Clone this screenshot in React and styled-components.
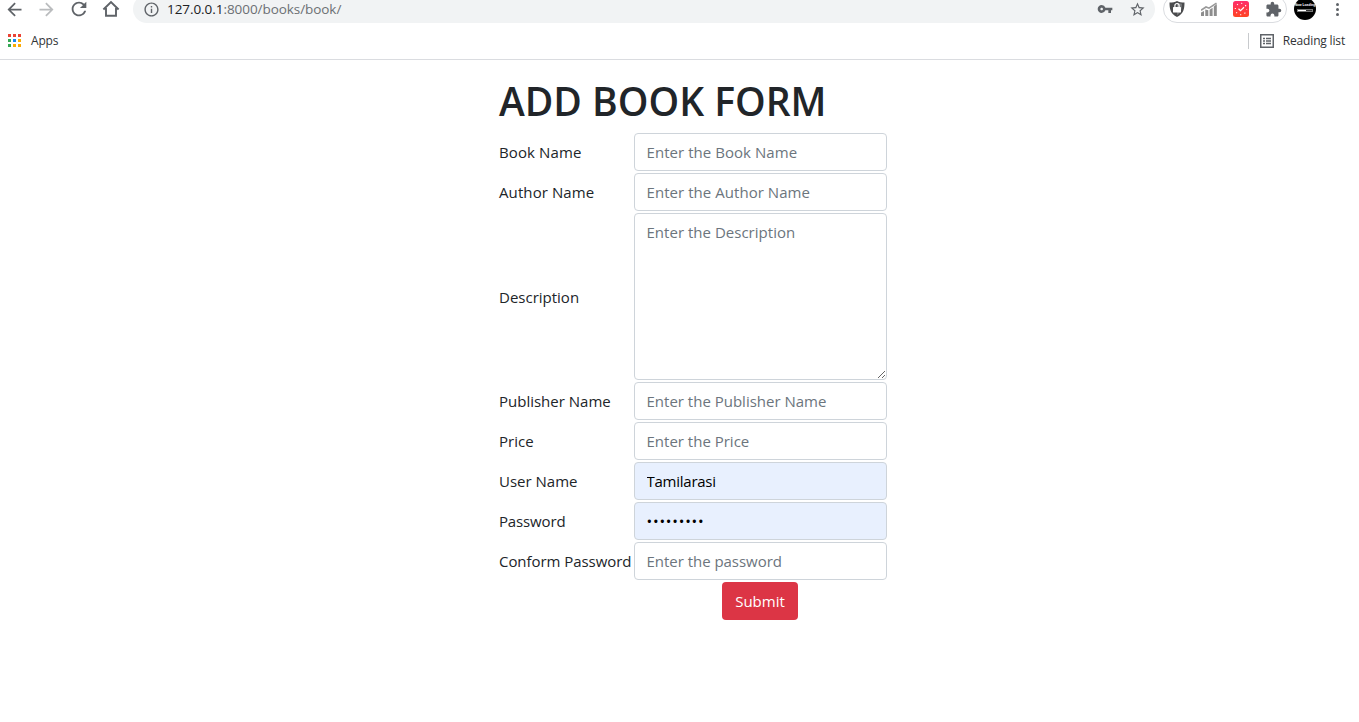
import React from "react";
import styled, { createGlobalStyle } from "styled-components";
import { MdArrowBack, MdArrowForward, MdRefresh, MdInfoOutline, MdVpnKey, MdStarBorder, MdExtension } from "react-icons/md";

const GlobalStyle = createGlobalStyle`
  *, *::before, *::after { box-sizing: border-box; }
  body {
    margin: 0;
    background: #fff;
    color: #212529;
    font-family: "Segoe UI", "Open Sans", "Noto Sans", sans-serif;
    overflow: hidden;
  }
  svg { display: block; flex: none; }
`;

const Chrome = styled.header`
  height: 60px;
  overflow: hidden;
  border-bottom: 1px solid #dadce0;
`;

const Toolbar = styled.div`
  display: flex;
  align-items: center;
  height: 28px;
  margin-top: -5px;
`;

const NavButton = styled.span`
  display: flex;
  justify-content: center;
  width: 32px;
  color: ${(p) => (p.$disabled ? "#babcbe" : "#5f6368")};
`;

const NavGroup = styled.div`
  display: flex;
  align-items: center;
  width: 134px;
  margin-left: -1px;
  svg { margin-left: -1px; }
`;

const AddressBar = styled.div`
  display: flex;
  align-items: center;
  width: 1022px;
  height: 28px;
  padding: 0 9px 0 10px;
  border-radius: 14px;
  background: #f1f3f4;
  color: #5f6368;
`;

const Url = styled.span`
  flex: 1;
  margin-left: 7px;
  font-size: 13.5px;
  line-height: 20px;
  letter-spacing: ${(p) => p.$tracking}px;
  color: #6b6f73;
  b { font-weight: 400; color: #202124; }
`;

const AddressActions = styled.div`
  display: flex;
  align-items: center;
  gap: 16px;
`;

const Extensions = styled.div`
  display: flex;
  align-items: center;
  gap: 16px;
  width: 124px;
  height: 28px;
  margin-left: 8px;
  padding-left: 5px;
  border: 1px solid #dadce0;
  border-radius: 14px;
  color: #5f6368;
`;

const Avatar = styled.div`
  display: flex;
  flex-direction: column;
  align-items: center;
  width: 22px;
  height: 22px;
  margin-left: 7px;
  border-radius: 50%;
  background: #000;
  color: #fff;
`;

const Menu = styled.div`
  display: grid;
  gap: 2px;
  margin-left: 20px;
  i { width: 3px; height: 3px; border-radius: 50%; background: #5f6368; }
`;

const Bookmarks = styled.div`
  display: flex;
  align-items: center;
  justify-content: space-between;
  height: 36px;
  padding: 0 14px 0 8px;
  font-size: 12px;
  line-height: 16px;
  color: #303336;
`;

const BookmarkItem = styled.div`
  display: flex;
  align-items: center;
  gap: ${(p) => p.$gap}px;
  letter-spacing: ${(p) => p.$tracking}px;
`;

const BookmarkText = styled.span`
  margin-top: -1px;
`;

const Divider = styled.span`
  width: 1px;
  height: 16px;
  margin-right: 11px;
  background: #c8cacd;
`;

const AppsGrid = styled.span`
  display: grid;
  grid-template-columns: repeat(3, 3px);
  gap: 2px;
  margin-top: -1px;
`;

const AppsDot = styled.i`
  height: 3px;
  background: ${(p) => p.$color};
`;

const ReadingGroup = styled.div`
  display: flex;
  align-items: center;
`;

const Page = styled.main`
  width: 388px;
  margin: 17px 0 0 499px;
`;

const Title = styled.h1`
  margin: 0 0 8px;
  font-size: 39px;
  line-height: 48px;
  font-weight: 600;
  letter-spacing: ${(p) => p.$tracking}px;
  white-space: nowrap;
`;

const Form = styled.form`
  display: grid;
  gap: 2px;
`;

const Row = styled.div`
  display: grid;
  grid-template-columns: 135px 253px;
  align-items: center;
`;

const Label = styled.label`
  font-size: 15px;
  line-height: 24px;
  letter-spacing: ${(p) => p.$tracking}px;
  white-space: nowrap;
`;

const Field = styled.input`
  display: block;
  width: 100%;
  height: ${(p) => (p.$tall ? 167 : 38)}px;
  margin: 0;
  padding: 6px 11.5px;
  border: 1px solid #ced4da;
  border-radius: 4px;
  outline: 0;
  background: ${(p) => (p.$filled ? "#e8f0fe" : "#fff")};
  color: #000;
  font-family: inherit;
  font-size: 15px;
  line-height: 24px;
  letter-spacing: ${(p) => p.$tracking}px;
  &::placeholder { color: #6c757d; opacity: 1; }
`;

const Submit = styled.button`
  justify-self: start;
  width: 76px;
  height: 38px;
  margin-left: 223px;
  padding: 0;
  border: 0;
  border-radius: 4px;
  background: #dc3545;
  color: #fff;
  font-family: inherit;
  font-size: 15px;
  line-height: 24px;
`;

const fields = [
  { label: "Book Name", placeholder: "Enter the Book Name", lt: 0.12, ft: 0.05 },
  { label: "Author Name", placeholder: "Enter the Author Name", lt: 0.1, ft: 0.05 },
  { label: "Description", placeholder: "Enter the Description", tall: true, lt: 0, ft: 0.02 },
  { label: "Publisher Name", placeholder: "Enter the Publisher Name", lt: 0, ft: 0 },
  { label: "Price", placeholder: "Enter the Price", lt: 0, ft: 0 },
  { label: "User Name", value: "Tamilarasi", lt: 0, ft: -0.25 },
  { label: "Password", value: "123456789", type: "password", lt: -0.15, ft: 0.8 },
  { label: "Conform Password", placeholder: "Enter the password", type: "password", lt: -0.05, ft: -0.03 },
];

const appColors = ["#ea4335", "#ea4335", "#ea4335", "#34a853", "#1a88f0", "#fbab05", "#34a853", "#fbab05", "#fbab05"];

const HomeIcon = () => (
  <svg width="18" height="18" viewBox="0 0 18 18" fill="none" stroke="#5f6368" strokeWidth="1.9">
    <path d="M1.400 9.500 9 2l7.600 7.500M4 8v7.700h10V8" />
  </svg>
);

const ShieldIcon = () => (
  <svg width="16" height="18" viewBox="0 0 16 18">
    <path d="M8 1c2 1 4.500 1.500 7.500 1.600C15.500 9 14.500 14 8 17 1.500 14 .5 9 .5 2.600 3.500 2.500 6 2 8 1Z" fill="#4a4b4d" />
    <path d="M8 2.500c1.500.8 3 1.100 5 1.300-.2 5-1 9-5 11.400Z" fill="#77797b" />
    <rect x="4" y="7" width="8" height="5.500" rx=".6" fill="#fff" />
    <path d="M5.900 7.500V5.600a2.100 2.100 0 0 1 4.200 0v1.900" fill="none" stroke="#fff" strokeWidth="1.200" />
  </svg>
);

const ChartIcon = () => (
  <svg width="16" height="14" viewBox="0 0 16 14" fill="#8d8d8d">
    <path d="M0 10.500 3 9v5H0zM4.300 7.500l3 .8V14h-3zM8.600 7.800l3-2V14h-3zM12.800 4.500 15.800 2v12h-3z" />
    <path d="M0 8.300 5 5l3 1.200 7.500-5" fill="none" stroke="#999" strokeWidth="1.600" />
  </svg>
);

const ClockIcon = () => (
  <svg width="16" height="16" viewBox="0 0 16 16">
    <defs>
      <linearGradient id="clock" x1="0" y1="0" x2="0" y2="1">
        <stop offset="0" stopColor="#ff2d6b" />
        <stop offset="1" stopColor="#ff4422" />
      </linearGradient>
    </defs>
    <rect width="16" height="16" rx="2.500" fill="url(#clock)" />
    <circle cx="8" cy="8" r="5.700" fill="none" stroke="#fff" strokeWidth="1.100" strokeDasharray="1.100 3.377" strokeDashoffset=".5" />
    <path d="m5.500 7.800 2 1.800 3.500-3.300" fill="none" stroke="#fff" strokeWidth="1.200" />
  </svg>
);

const AvatarText = styled.span`
  width: 22px;
  margin-top: 5px;
  font-family: "Liberation Sans", sans-serif;
  font-size: 3.3px;
  line-height: 5px;
  font-weight: 700;
  text-align: center;
  white-space: nowrap;
`;

const AvatarBar = styled.span`
  width: 16px;
  height: 3px;
  margin-top: 1px;
  border: 0.5px solid #777;
  background: linear-gradient(90deg, #fff 55%, #333 55%);
`;

const ReadingIcon = () => (
  <svg width="14" height="14" viewBox="0 0 14 14" fill="none" stroke="#5f6368">
    <rect x=".75" y=".75" width="12.500" height="12.500" strokeWidth="1.500" />
    <path d="M3 4.500h2M3 7h2M3 9.500h2M6 4.500h5M6 7h5M6 9.500h5" strokeWidth="1.300" />
  </svg>
);

export default function App() {
  return (
    <>
      <GlobalStyle />
      <Chrome>
        <Toolbar>
          <NavGroup>
            <NavButton><MdArrowBack size={21} /></NavButton>
            <NavButton $disabled><MdArrowForward size={21} /></NavButton>
            <NavButton><MdRefresh size={22} /></NavButton>
            <NavButton><HomeIcon /></NavButton>
          </NavGroup>
          <AddressBar>
            <MdInfoOutline size={17} />
            <Url $tracking={-0.06}><b>127.0.0.1</b>:8000/books/book/</Url>
            <AddressActions>
              <MdVpnKey size={16} />
              <MdStarBorder size={17} />
            </AddressActions>
          </AddressBar>
          <Extensions>
            <ShieldIcon />
            <ChartIcon />
            <ClockIcon />
            <MdExtension size={17} />
          </Extensions>
          <Avatar>
            <AvatarText>Now Loading</AvatarText>
            <AvatarBar />
          </Avatar>
          <Menu><i /><i /><i /></Menu>
        </Toolbar>
        <Bookmarks>
          <BookmarkItem $gap={10} $tracking={-0.2}>
            <AppsGrid>{appColors.map((c, i) => <AppsDot key={i} $color={c} />)}</AppsGrid>
            <BookmarkText>Apps</BookmarkText>
          </BookmarkItem>
          <ReadingGroup>
            <Divider />
            <BookmarkItem $gap={9} $tracking={-0.17}>
              <ReadingIcon />
              <BookmarkText>Reading list</BookmarkText>
            </BookmarkItem>
          </ReadingGroup>
        </Bookmarks>
      </Chrome>
      <Page>
        <Title $tracking={0}>ADD BOOK FORM</Title>
        <Form onSubmit={(e) => e.preventDefault()}>
          {fields.map((f) => (
            <Row key={f.label}>
              <Label $tracking={f.lt}>{f.label}</Label>
              <Field
                as={f.tall ? "textarea" : "input"}
                type={f.tall ? undefined : f.type || "text"}
                placeholder={f.placeholder}
                defaultValue={f.value}
                $tall={f.tall}
                $filled={Boolean(f.value)}
                $tracking={f.ft}
              />
            </Row>
          ))}
          <Submit>Submit</Submit>
        </Form>
      </Page>
    </>
  );
}
